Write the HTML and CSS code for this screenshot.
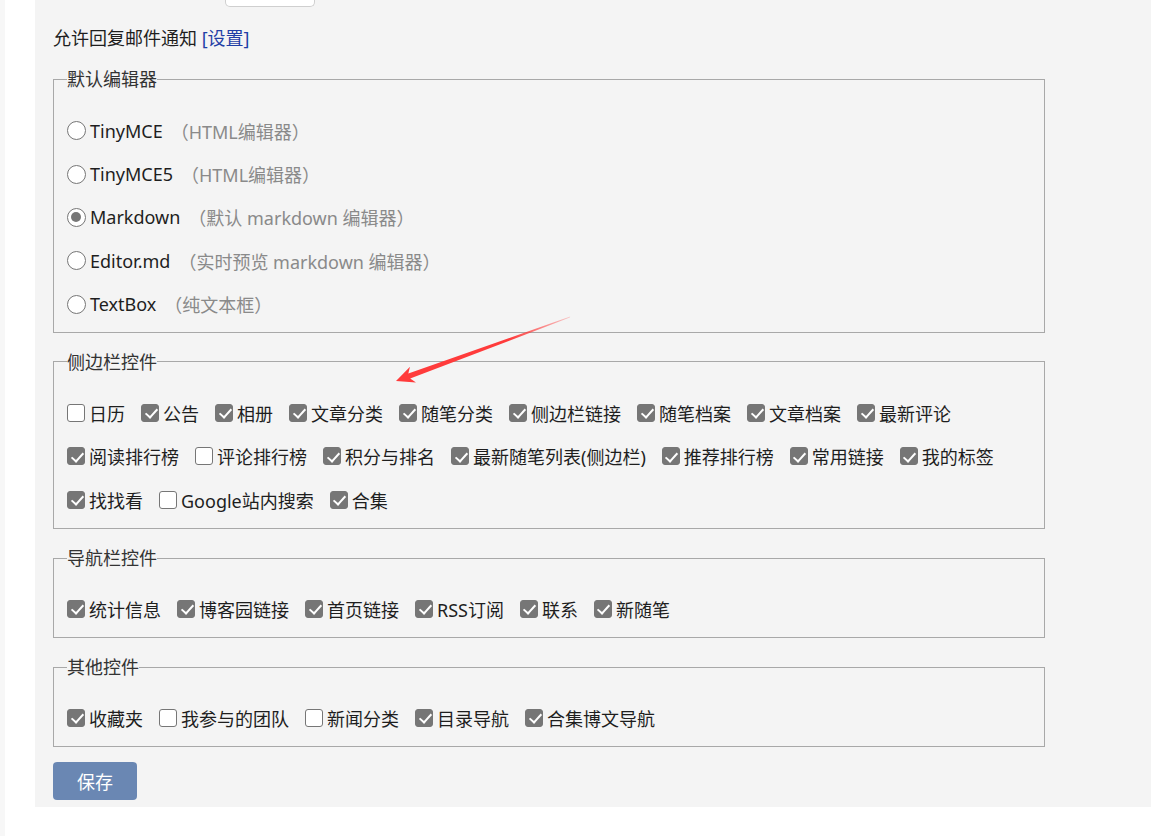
FILE: index.html
```html
<!DOCTYPE html>
<html lang="zh-CN">
<head>
<meta charset="utf-8">
<title>选项设置</title>
<link rel="stylesheet" href="styles.css">
</head>
<body>
<div class="edge"></div>
<div class="gutter"></div>
<main class="main">
  <form class="panel">
    <div class="select-stub"></div>
    <p class="notify">允许回复邮件通知 <a href="#" class="link">[设置]</a></p>

    <fieldset class="group first">
      <legend>默认编辑器</legend>
      <label class="radio-row"><input type="radio" name="editor">TinyMCE<span class="hint">（HTML编辑器）</span></label>
      <label class="radio-row"><input type="radio" name="editor">TinyMCE5<span class="hint">（HTML编辑器）</span></label>
      <label class="radio-row"><input type="radio" name="editor" checked>Markdown<span class="hint">（默认 markdown 编辑器）</span></label>
      <label class="radio-row"><input type="radio" name="editor">Editor.md<span class="hint">（实时预览 markdown 编辑器）</span></label>
      <label class="radio-row"><input type="radio" name="editor">TextBox<span class="hint">（纯文本框）</span></label>
    </fieldset>

    <fieldset class="group">
      <legend>侧边栏控件</legend>
      <div class="checks tall">
        <label class="check"><input type="checkbox">日历</label>
        <label class="check"><input type="checkbox" checked>公告</label>
        <label class="check"><input type="checkbox" checked>相册</label>
        <label class="check"><input type="checkbox" checked>文章分类</label>
        <label class="check"><input type="checkbox" checked>随笔分类</label>
        <label class="check"><input type="checkbox" checked>侧边栏链接</label>
        <label class="check"><input type="checkbox" checked>随笔档案</label>
        <label class="check"><input type="checkbox" checked>文章档案</label>
        <label class="check"><input type="checkbox" checked>最新评论</label>
        <label class="check"><input type="checkbox" checked>阅读排行榜</label>
        <label class="check"><input type="checkbox">评论排行榜</label>
        <label class="check"><input type="checkbox" checked>积分与排名</label>
        <label class="check"><input type="checkbox" checked>最新随笔列表(侧边栏)</label>
        <label class="check"><input type="checkbox" checked>推荐排行榜</label>
        <label class="check"><input type="checkbox" checked>常用链接</label>
        <label class="check"><input type="checkbox" checked>我的标签</label>
        <label class="check"><input type="checkbox" checked>找找看</label>
        <label class="check"><input type="checkbox">Google站内搜索</label>
        <label class="check"><input type="checkbox" checked>合集</label>
      </div>
    </fieldset>

    <fieldset class="group">
      <legend>导航栏控件</legend>
      <div class="checks">
        <label class="check"><input type="checkbox" checked>统计信息</label>
        <label class="check"><input type="checkbox" checked>博客园链接</label>
        <label class="check"><input type="checkbox" checked>首页链接</label>
        <label class="check"><input type="checkbox" checked>RSS订阅</label>
        <label class="check"><input type="checkbox" checked>联系</label>
        <label class="check"><input type="checkbox" checked>新随笔</label>
      </div>
    </fieldset>

    <fieldset class="group">
      <legend>其他控件</legend>
      <div class="checks">
        <label class="check"><input type="checkbox" checked>收藏夹</label>
        <label class="check"><input type="checkbox">我参与的团队</label>
        <label class="check"><input type="checkbox">新闻分类</label>
        <label class="check"><input type="checkbox" checked>目录导航</label>
        <label class="check"><input type="checkbox" checked>合集博文导航</label>
      </div>
    </fieldset>

    <button type="button" class="save">保存</button>
  </form>
</main>

<svg class="annotation" width="1151" height="836" viewBox="0 0 1151 836" aria-hidden="true">
  <defs>
    <linearGradient id="fade" gradientUnits="userSpaceOnUse" x1="570" y1="317" x2="396" y2="381">
      <stop offset="0" stop-color="#ff3b3b" stop-opacity="0.25"/>
      <stop offset="0.35" stop-color="#ff3b3b" stop-opacity="1"/>
      <stop offset="1" stop-color="#ff3b3b" stop-opacity="1"/>
    </linearGradient>
  </defs>
  <polygon fill="url(#fade)" points="396,381 410,366.8 408.3,373.6 570.2,316.6 569.8,317.6 410.2,378.6 416,382.6"/>
</svg>
</body>
</html>
```

FILE: styles.css
```css
* {
  box-sizing: border-box;
}

html, body {
  margin: 0;
  padding: 0;
  background: #ffffff;
}

body {
  display: flex;
  min-height: 836px;
  font-family: "Noto Sans", "Noto Sans CJK SC", sans-serif;
  font-size: 18px;
  color: #1e1e1e;
  position: relative;
}

.edge {
  width: 5px;
  background: #f7f7f7;
  flex: none;
}

.gutter {
  width: 30px;
  flex: none;
}

.main {
  flex: 1;
  align-self: flex-start;
}

.panel {
  background: #f4f4f4;
  padding: 0 0 7px 18px;
  margin: 0;
}

.select-stub {
  width: 90px;
  height: 7px;
  margin-left: 172px;
  background: #ffffff;
  border: 1px solid #cfcfcf;
  border-top: none;
  border-radius: 0 0 5px 5px;
}

.notify {
  margin: 19px 0 0;
  line-height: 24px;
}

.link {
  color: #1f3fa6;
  text-decoration: none;
}

.group {
  width: 992px;
  margin: 17px 0 0;
  padding: 17px 13px 7px;
  border: 1px solid #a8a8a8;
  min-inline-size: 0;
}

.group.first {
  padding-top: 18px;
  padding-bottom: 6px;
}

.group legend {
  padding: 0;
  line-height: 24px;
  color: #333333;
}

.radio-row {
  display: flex;
  align-items: center;
  height: 43.4px;
}

.hint {
  color: #8a8a8a;
  margin-left: 8px;
}

.radio-row input {
  appearance: none;
  -webkit-appearance: none;
  width: 19px;
  height: 19px;
  margin: 0 4px 0 0;
  border: 1.5px solid #767676;
  border-radius: 50%;
  background: #ffffff;
  flex: none;
  position: relative;
}

.radio-row input:checked::after {
  content: "";
  position: absolute;
  left: 3px;
  top: 3px;
  width: 10px;
  height: 10px;
  border-radius: 50%;
  background: #767676;
}

.checks {
  display: flex;
  flex-wrap: wrap;
  column-gap: 16px;
}

.check {
  display: flex;
  align-items: center;
  height: 43px;
}

.checks.tall .check {
  height: 43.5px;
}

.check input {
  appearance: none;
  -webkit-appearance: none;
  width: 18px;
  height: 18px;
  margin: 0 4px 0 0;
  border: 1px solid #767676;
  border-radius: 3px;
  background: #ffffff;
  flex: none;
  position: relative;
}

.check input:checked {
  background: #767676;
  border-color: #767676;
}

.check input:checked::after {
  content: "";
  position: absolute;
  left: 5.5px;
  top: 1.5px;
  width: 5px;
  height: 10px;
  border-right: 2.5px solid #ffffff;
  border-bottom: 2.5px solid #ffffff;
  transform: rotate(42deg);
}

.save {
  display: block;
  margin-top: 15px;
  width: 84px;
  height: 38px;
  border: none;
  border-radius: 4px;
  background: #6a87b3;
  color: #ffffff;
  font: inherit;
  font-size: 18px;
  padding: 0;
}

.annotation {
  position: absolute;
  left: 0;
  top: 0;
  pointer-events: none;
}
```
